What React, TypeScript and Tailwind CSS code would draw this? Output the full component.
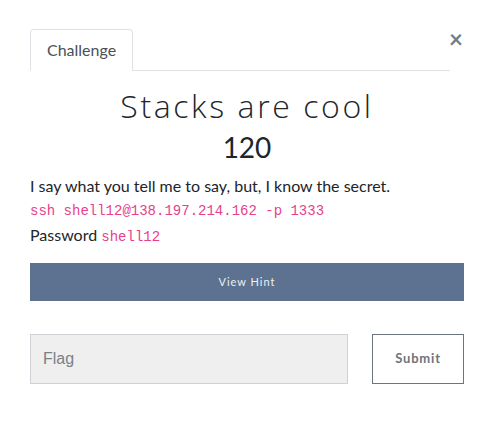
export default function App() {
  return (
    <div className="min-h-[423px] w-full bg-white font-['Lato',sans-serif] text-[#212529]">
      <div className="pl-[30px] pr-[28px] pt-[29px]">
        {/* TABS + CLOSE */}
        <div className="mr-[2px] flex items-start">
          <div className="flex flex-1 border-b border-[#dee2e6]">
            <div className="-mb-px rounded-t-[4px] border border-b-white border-[#dee2e6] bg-white px-4 py-[9px] text-[16px] leading-[22px] text-[#495057]">
              Challenge
            </div>
          </div>
          <button className="-mt-[2px] flex w-[12px] justify-center text-[24px] font-bold leading-none text-[#7a7a7a]">
            ×
          </button>
        </div>

        {/* TITLE */}
        <div className="pt-[16px] text-center">
          <h1 className="font-['Open_Sans',sans-serif] text-[32px] font-light leading-[38px] tracking-[2.6px] text-[#212529]">
            Stacks are cool
          </h1>
          <h3 className="mt-[5px] text-[28px] leading-[34px] text-[#212529]">120</h3>
        </div>

        {/* DESCRIPTION */}
        <div className="mt-[10px] text-[16px] leading-[24px]">
          <p>I say what you tell me to say, but, I know the secret.</p>
          <p className="mt-[1px] font-['Liberation_Mono',monospace] text-[14px] text-[#e83e8c]">
            ssh shell12@138.197.214.162 -p 1333
          </p>
          <p>
            Password{" "}
            <span className="font-['Liberation_Mono',monospace] text-[14px] text-[#e83e8c]">shell12</span>
          </p>
        </div>

        {/* HINT */}
        <button className="mt-[14px] h-[38px] w-full bg-[#5c7290] text-[11px] tracking-[1px] text-[#eef1f5]">
          View Hint
        </button>

        {/* FLAG FORM */}
        <div className="mt-[33px] flex gap-6">
          <input
            placeholder="Flag"
            className="h-[50px] flex-1 border border-[#cfd1d6] bg-[#efefef] px-[12px] font-['Liberation_Sans',sans-serif] text-[16px] placeholder:text-[#7b8088] outline-none"
          />
          <button className="h-[50px] w-[92px] border border-[#6c757d] bg-white text-[13px] font-bold tracking-[0.8px] text-[#6c757d]">
            Submit
          </button>
        </div>
      </div>
    </div>
  );
}
